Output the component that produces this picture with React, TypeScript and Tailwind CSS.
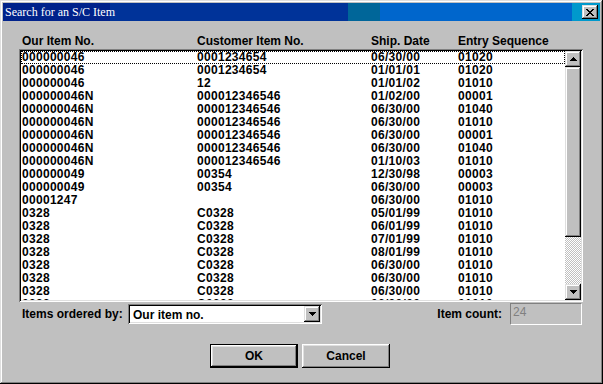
import type { FC } from "react";

type Row = [string, string, string, string];

const rows: Row[] = [
  ["000000046", "0001234654", "06/30/00", "01020"],
  ["000000046", "0001234654", "01/01/01", "01020"],
  ["000000046", "12", "01/01/02", "01010"],
  ["000000046N", "000012346546", "01/02/00", "00001"],
  ["000000046N", "000012346546", "06/30/00", "01040"],
  ["000000046N", "000012346546", "06/30/00", "01010"],
  ["000000046N", "000012346546", "06/30/00", "00001"],
  ["000000046N", "000012346546", "06/30/00", "01040"],
  ["000000046N", "000012346546", "01/10/03", "01010"],
  ["000000049", "00354", "12/30/98", "00003"],
  ["000000049", "00354", "06/30/00", "00003"],
  ["00001247", "", "06/30/00", "01010"],
  ["0328", "C0328", "05/01/99", "01010"],
  ["0328", "C0328", "06/01/99", "01010"],
  ["0328", "C0328", "07/01/99", "01010"],
  ["0328", "C0328", "08/01/99", "01010"],
  ["0328", "C0328", "06/30/00", "01010"],
  ["0328", "C0328", "06/30/00", "01010"],
  ["0328", "C0328", "06/30/00", "01010"],
  ["0328", "C0328", "06/30/00", "01010"],
];

// win95 bevels
const raised =
  "shadow-[inset_-1px_-1px_#000,inset_1px_1px_#fff,inset_-2px_-2px_#808080,inset_2px_2px_#dfdfdf]";
const scrollBtn =
  "shadow-[inset_-1px_-1px_#000,inset_1px_1px_#dfdfdf,inset_-2px_-2px_#808080,inset_2px_2px_#fff]";
const sunken =
  "shadow-[inset_1px_1px_#808080,inset_-1px_-1px_#fff,inset_2px_2px_#000,inset_-2px_-2px_#dfdfdf]";

const ArrowUp: FC = () => (
  <svg width="7" height="4" shapeRendering="crispEdges">
    <path d="M3 0h1v1H3z M2 1h3v1H2z M1 2h5v1H1z M0 3h7v1H0z" fill="#000" />
  </svg>
);

const ArrowDown: FC = () => (
  <svg width="7" height="4" shapeRendering="crispEdges">
    <path d="M0 0h7v1H0z M1 1h5v1H1z M2 2h3v1H2z M3 3h1v1H3z" fill="#000" />
  </svg>
);

const CloseX: FC = () => (
  <svg width="8" height="7" shapeRendering="crispEdges">
    <path
      d="M0 0h2v1H0z M6 0h2v1H6z M1 1h2v1H1z M5 1h2v1H5z M2 2h4v1H2z M3 3h2v1H3z M2 4h4v1H2z M1 5h2v1H1z M5 5h2v1H5z M0 6h2v1H0z M6 6h2v1H6z"
      fill="#000"
    />
  </svg>
);

const App: FC = () => {
  return (
    <div className="flex h-[384px] w-[603px] flex-col bg-[#c0c0c0] p-[3px] font-['Liberation_Sans',Arial,sans-serif] text-[12px] font-bold text-black shadow-[inset_-1px_-1px_#000,inset_1px_1px_#dfdfdf,inset_-2px_-2px_#808080,inset_2px_2px_#fff]">
      {/* TITLE BAR */}
      <div className="flex h-[18px] items-center justify-between bg-[image:linear-gradient(90deg,#00228b_107px,#003399_107px_345px,#006699_345px_377px,#0066cc_377px_569px,#0099cc_569px)] pl-[2px] pr-[2px]">
        <span className="font-['Liberation_Serif',serif] text-[12px] font-normal leading-[18px] text-white">
          Search for an S/C Item
        </span>
        <button className={`flex h-[14px] w-[16px] items-center justify-center bg-[#c0c0c0] ${scrollBtn}`}>
          <CloseX />
        </button>
      </div>

      {/* COLUMN HEADERS */}
      <div className="mt-[14px] flex h-[14px] pl-[19px] leading-[13px]">
        <div className="w-[175px]">Our Item No.</div>
        <div className="w-[174px]">Customer Item No.</div>
        <div className="w-[87px]">Ship. Date</div>
        <div>Entry Sequence</div>
      </div>

      {/* LIST */}
      <div className={`ml-[16px] flex h-[253px] w-[564px] bg-white p-[2px] ${sunken}`}>
        <div className="flex w-[544px] flex-col overflow-hidden tracking-[0.3px]">
          {rows.map((r, i) => (
            <div
              key={i}
              className={`flex h-[13px] shrink-0 pl-[1px] leading-[13px] ${
                i === 0 ? "outline-1 -outline-offset-1 outline-black outline-dotted" : ""
              }`}
            >
              <div className="w-[175px]">{r[0]}</div>
              <div className="w-[174px]">{r[1]}</div>
              <div className="w-[87px]">{r[2]}</div>
              <div>{r[3]}</div>
            </div>
          ))}
        </div>
        <div className="flex w-[16px] flex-col">
          <div className={`flex h-[16px] items-center justify-center bg-[#c0c0c0] ${scrollBtn}`}>
            <ArrowUp />
          </div>
          <div className={`h-[170px] bg-[#c0c0c0] ${scrollBtn}`} />
          <div className="flex-1 bg-[image:repeating-conic-gradient(#c0c0c0_0%_25%,#ffffff_0%_50%)] bg-[length:2px_2px]" />
          <div className={`flex h-[16px] items-center justify-center bg-[#c0c0c0] ${scrollBtn}`}>
            <ArrowDown />
          </div>
        </div>
      </div>

      {/* ORDER + COUNT */}
      <div className="mt-[1px] flex h-[22px] items-center pl-[19px] pr-[18px]">
        <div className="w-[106px] leading-[13px]">Items ordered by:</div>
        <div className={`flex h-[20px] w-[194px] bg-white p-[2px] ${sunken}`}>
          <div className="flex-1 pl-[3px] pt-[1px] leading-[16px]">Our item no.</div>
          <div className={`flex h-[16px] w-[16px] items-center justify-center bg-[#c0c0c0] ${scrollBtn}`}>
            <ArrowDown />
          </div>
        </div>
        <div className="ml-auto mr-[8px] leading-[13px]">Item count:</div>
        <div className="h-[22px] w-[72px] border-b border-l border-r border-t border-b-white border-l-[#808080] border-r-white border-t-[#808080] pl-[2px] pt-[2px] font-normal leading-[13px] text-[#808080]">
          24
        </div>
      </div>

      {/* BUTTONS */}
      <div className="mt-[19px] flex gap-[4px] pl-[207px]">
        <button className={`h-[24px] w-[88px] border border-black bg-[#c0c0c0] font-bold ${raised}`}>
          OK
        </button>
        <button className={`h-[24px] w-[88px] bg-[#c0c0c0] font-bold ${raised}`}>
          Cancel
        </button>
      </div>
    </div>
  );
};

export default App;
